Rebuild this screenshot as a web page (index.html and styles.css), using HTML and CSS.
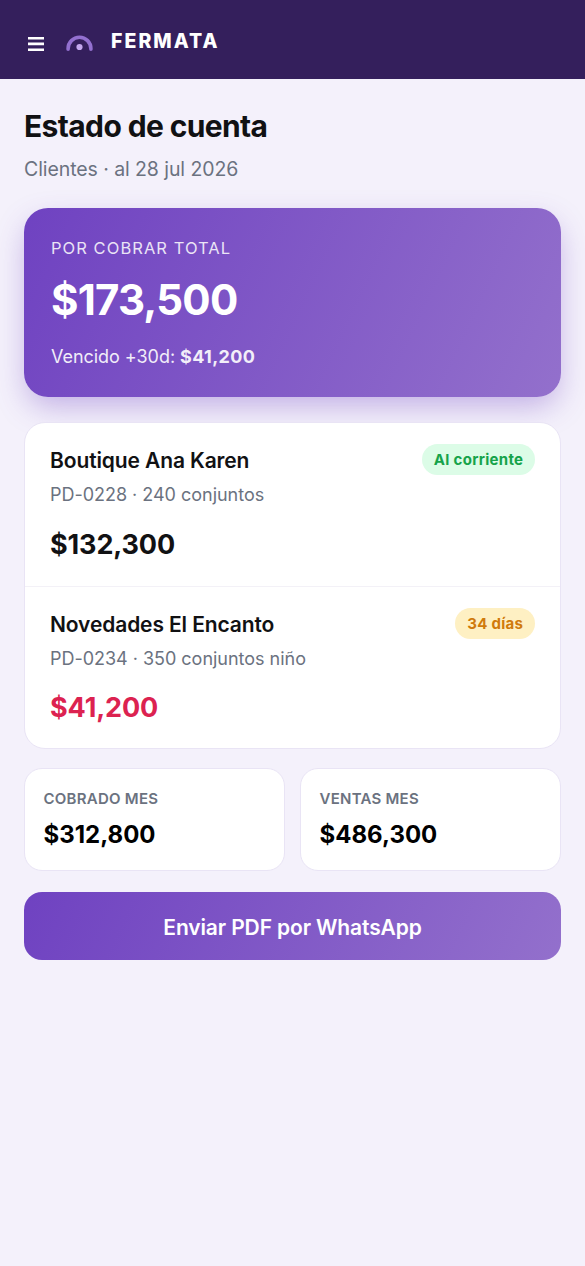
FILE: index.html
```html
<!DOCTYPE html>
<html lang="es">
<head>
<meta charset="utf-8">
<meta name="viewport" content="width=device-width, initial-scale=1">
<title>Estado de cuenta</title>
<link rel="stylesheet" href="styles.css">
</head>
<body>
<header class="topbar">
  <svg class="menu-icon" viewBox="0 0 16 14" aria-label="Menú">
    <path d="M0 1.2H16M0 6.9H16M0 12.7H16" stroke="#fff" stroke-width="2.6"/>
  </svg>
  <svg class="logo" viewBox="0 0 27 17" aria-hidden="true">
    <path d="M2.1 14.2V13.7a11.4 11.4 0 0 1 22.8 0V14.2" fill="none" stroke="#9370d0" stroke-width="3.6" stroke-linecap="round"/>
    <circle cx="13.5" cy="12" r="3.1" fill="#c4a8ee"/>
  </svg>
  <span class="brand">FERMATA</span>
</header>
<main class="content">
  <h1 class="title">Estado de cuenta</h1>
  <p class="subtitle">Clientes · al 28 jul 2026</p>

  <section class="total">
    <div class="total-label">POR COBRAR TOTAL</div>
    <div class="total-amount">$173,500</div>
    <div class="total-overdue">Vencido +30d: <strong>$41,200</strong></div>
  </section>

  <section class="clients">
    <article class="client">
      <div class="client-info">
        <h2 class="client-name">Boutique Ana Karen</h2>
        <p class="client-order">PD-0228 · 240 conjuntos</p>
        <div class="client-amount">$132,300</div>
      </div>
      <span class="pill pill-ok">Al corriente</span>
    </article>
    <article class="client">
      <div class="client-info">
        <h2 class="client-name">Novedades El Encanto</h2>
        <p class="client-order">PD-0234 · 350 conjuntos niño</p>
        <div class="client-amount late">$41,200</div>
      </div>
      <span class="pill pill-warn">34 días</span>
    </article>
  </section>

  <section class="stats">
    <div class="stat">
      <div class="stat-label">COBRADO MES</div>
      <div class="stat-value">$312,800</div>
    </div>
    <div class="stat">
      <div class="stat-label">VENTAS MES</div>
      <div class="stat-value">$486,300</div>
    </div>
  </section>

  <button class="send" type="button">Enviar PDF por WhatsApp</button>
</main>
</body>
</html>
```
FILE: styles.css
```css
* { box-sizing: border-box; margin: 0; padding: 0; }

body {
  min-height: 1266px;
  background: #f4f1fb;
  color: #111113;
  font-family: Inter, "Liberation Sans", sans-serif;
}

.topbar {
  display: flex;
  align-items: flex-start;
  height: 79.4px;
  padding: 0 28px;
  background: #341f5c;
}
.menu-icon { width: 16px; height: 14px; margin-top: 37px; }
.logo { width: 27px; height: 17px; margin: 35px 0 0 22px; }
.brand {
  margin: 29px 0 0 18px;
  color: #fff;
  font-size: 19.5px;
  font-weight: 800;
  line-height: 24px;
  letter-spacing: 2.05px;
}

.content { padding: 28.6px 24px 0; }
.title {
  font-size: 30px;
  font-weight: 750;
  line-height: 36px;
  letter-spacing: -0.62px;
}
.subtitle {
  margin-top: 13px;
  color: #6b7280;
  font-size: 19.5px;
  line-height: 24px;
  letter-spacing: -0.08px;
}

.total {
  height: 189px;
  margin-top: 27.4px;
  padding: 27.6px 27px;
  border-radius: 24px;
  background: linear-gradient(115deg, #6f42c1, #9370cc);
  box-shadow: 0 12px 30px -3px rgba(111, 66, 193, .38);
  color: #fff;
}
.total-label {
  font-size: 16.5px;
  line-height: 24px;
  letter-spacing: 1.05px;
  opacity: .85;
}
.total-amount {
  margin-top: 14.5px;
  font-size: 42px;
  font-weight: 750;
  line-height: 52px;
  letter-spacing: -0.8px;
}
.total-overdue {
  margin-top: 18.5px;
  font-size: 18px;
  line-height: 24px;
  letter-spacing: -0.04px;
  opacity: .9;
}
.total-overdue strong { letter-spacing: .35px; }

.clients {
  margin-top: 24.5px;
  border: 1.5px solid #e9e4f5;
  border-radius: 21px;
  background: #fff;
}
.client {
  display: flex;
  justify-content: space-between;
  align-items: flex-start;
  height: 163px;
  padding: 21px 25px 0;
}
.client + .client { height: 162.5px; border-top: 1.5px solid #f3f1f7; }
.client-info { padding-top: 4px; }
.client-name {
  font-size: 21px;
  font-weight: 600;
  line-height: 26px;
  letter-spacing: -0.12px;
}
.client-order {
  margin-top: 9px;
  color: #6b7280;
  font-size: 18px;
  line-height: 24px;
  letter-spacing: -0.02px;
}
.client-amount {
  margin-top: 21.2px;
  font-size: 27px;
  font-weight: 700;
  line-height: 34px;
  letter-spacing: -0.12px;
}
.client-amount.late { margin-top: 20.3px; color: #dc2250; }
.pill {
  padding: 4px 11.7px 4px 12px;
  border-radius: 16px;
  font-size: 15px;
  font-weight: 700;
  line-height: 23px;
  letter-spacing: .3px;
}
.pill-ok { background: #dcfce7; color: #16a34a; }
.pill-warn { background: #fef0c3; color: #d07a0c; }

.stats {
  display: grid;
  grid-template-columns: 1fr 1fr;
  gap: 15px;
  margin-top: 18.5px;
}
.stat {
  height: 103px;
  padding: 20.2px 18.5px 0;
  border: 1.5px solid #e9e4f5;
  border-radius: 18px;
  background: #fff;
}
.stat-label {
  color: #6b7280;
  font-size: 15px;
  font-weight: 600;
  line-height: 20px;
  letter-spacing: .25px;
}
.stat-value {
  margin-top: 11px;
  color: #000;
  font-size: 24px;
  font-weight: 700;
  line-height: 30px;
}

.send {
  display: block;
  width: 100%;
  height: 68px;
  margin-top: 21px;
  padding-top: 3.5px;
  border: 0;
  border-radius: 18px;
  background: linear-gradient(115deg, #6f42c1, #9370cc);
  color: #fff;
  font-family: inherit;
  font-size: 21px;
  font-weight: 620;
  letter-spacing: -0.12px;
}
```
